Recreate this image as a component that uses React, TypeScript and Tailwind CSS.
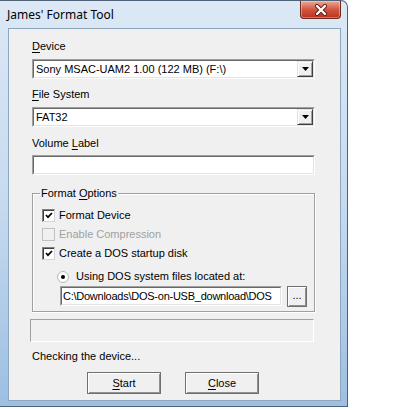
import React from "react";

const font = { fontFamily: '"Liberation Sans", Arial, sans-serif' };

function U({ children }: { children: React.ReactNode }) {
  return <span className="underline underline-offset-[2px] decoration-[1px]">{children}</span>;
}

function Sunken({ className = "", children }: { className?: string; children?: React.ReactNode }) {
  return (
    <div
      className={`border border-t-[#a0a0a0] border-l-[#a0a0a0] border-b-white border-r-white ${className}`}
    >
      <div className="h-full w-full border border-t-[#696969] border-l-[#696969] border-b-[#e3e3e3] border-r-[#e3e3e3] bg-white flex items-center">
        {children}
      </div>
    </div>
  );
}

function Combo({ value }: { value: string }) {
  return (
    <Sunken className="w-[283px] h-[20px]">
      <span className="flex-1 pl-[2px] text-[11px] leading-[13px] text-black whitespace-nowrap overflow-hidden">
        {value}
      </span>
      <div className="w-[16px] h-[16px] bg-[#f0f0f0] border border-t-[#e3e3e3] border-l-[#e3e3e3] border-b-[#404040] border-r-[#404040] shadow-[inset_1px_1px_0_#fff,inset_-1px_-1px_0_#a0a0a0] flex items-center justify-center">
        <svg width="7" height="4" viewBox="0 0 7 4">
          <path d="M0 0 H7 L3.5 4 Z" fill="#000" />
        </svg>
      </div>
    </Sunken>
  );
}

function Check({ checked, disabled }: { checked?: boolean; disabled?: boolean }) {
  return (
    <div
      className={`w-[13px] h-[13px] border ${
        disabled
          ? "border-[#c0c0c0] bg-[#f0f0f0]"
          : "border-t-[#808080] border-l-[#808080] border-b-[#d4d4d4] border-r-[#d4d4d4] bg-white shadow-[inset_1px_1px_0_#404040]"
      } flex items-center justify-center`}
    >
      {checked && (
        <svg width="8" height="7" viewBox="0 0 8 7">
          <path d="M1 3 L3 5.2 L7 1" fill="none" stroke="#000" strokeWidth="1.7" />
        </svg>
      )}
    </div>
  );
}

function Button({ children }: { children: React.ReactNode }) {
  return (
    <div className="w-[74px] h-[22px] bg-[#f0f0f0] border border-[#707070] shadow-[inset_1px_1px_0_#fff,inset_-1px_-1px_0_#909090] flex items-center justify-center text-[11px] leading-[13px] text-black">
      {children}
    </div>
  );
}

export default function App() {
  return (
    <div className="w-[419px] h-[410px] bg-white flex items-start" style={font}>
      <div className="relative w-[348px] h-[407px] rounded-tr-[7px] border-t border-r border-b border-[#4f6177] bg-linear-to-b from-[#dce8f5] via-[#c6daef] to-[#9cbfe2] flex flex-col">
        <div
          className="h-[27px] pl-[7px] flex items-center text-[12px] text-black"
          style={{ fontFamily: '"Noto Sans", "Open Sans", sans-serif' }}
        >
          James' Format Tool
        </div>

        <div className="absolute top-0 right-[6px] w-[41px] h-[18px] rounded-b-[4px] border border-t-0 border-[#6b2a20] bg-linear-to-b from-[#e9a995] via-[#d2563f] to-[#bc2f18] shadow-[inset_0_0_0_1px_rgba(255,255,255,0.35)] flex items-center justify-center">
          <svg width="14" height="12" viewBox="0 0 14 12">
            <path d="M3 2 L11 10 M11 2 L3 10" stroke="#5a1a10" strokeWidth="4" strokeLinecap="round" />
            <path d="M3 2 L11 10 M11 2 L3 10" stroke="#fff" strokeWidth="2.4" strokeLinecap="round" />
          </svg>
        </div>

        <div className="ml-[8px] w-[333px] h-[373px] border border-[#8fa6bf] bg-[#f0f0f0] pl-[23px] flex flex-col text-[11px] leading-[13px] text-black">
          <div className="mt-[11px] h-[13px]">
            <U>D</U>evice
          </div>
          <div className="mt-[6px]">
            <Combo value="Sony MSAC-UAM2 1.00 (122 MB) (F:\)" />
          </div>
          <div className="mt-[9px] h-[13px]">
            <U>F</U>ile System
          </div>
          <div className="mt-[6px]">
            <Combo value="FAT32" />
          </div>
          <div className="mt-[10px] h-[13px]">
            Volume <U>L</U>abel
          </div>
          <div className="mt-[5px]">
            <Sunken className="w-[283px] h-[20px]" />
          </div>

          <div className="relative mt-[18px] w-[283px] h-[119px] border border-[#a0a0a0] shadow-[inset_1px_1px_0_#fff,1px_1px_0_#fff] pt-[12px] pl-[9px] flex flex-col">
            <span className="absolute -top-[7px] left-[7px] px-[1px] bg-[#f0f0f0]">
              Format <U>O</U>ptions
            </span>
            <div className="h-[19px] flex items-center gap-[4px]">
              <Check checked />
              <span>Format Device</span>
            </div>
            <div className="h-[19px] flex items-center gap-[4px]">
              <Check disabled />
              <span className="text-[#a0a0a0]">Enable Compression</span>
            </div>
            <div className="h-[19px] flex items-center gap-[4px]">
              <Check checked />
              <span>Create a DOS startup disk</span>
            </div>
            <div className="mt-[4px] h-[19px] pl-[15px] flex items-center gap-[7px]">
              <div className="w-[12px] h-[12px] rounded-full border border-[#b8b8b8] bg-white flex items-center justify-center">
                <div className="w-[4px] h-[4px] rounded-full bg-black" />
              </div>
              <span>Using DOS system files located at:</span>
            </div>
            <div className="h-[21px] pl-[18px] flex items-start gap-[5px]">
              <Sunken className="w-[222px] h-[20px]">
                <span className="pl-[1px] whitespace-nowrap tracking-[-0.25px]">
                  C:\Downloads\DOS-on-USB_download\DOS
                </span>
              </Sunken>
              <div className="w-[20px] h-[21px] bg-[#f0f0f0] border border-[#707070] shadow-[inset_1px_1px_0_#fff,inset_-1px_-1px_0_#909090] flex items-end justify-center pb-[4px]">
                ...
              </div>
            </div>
          </div>

          <div className="mt-[7px] -ml-[2px] w-[284px] h-[23px] border border-t-[#a0a0a0] border-l-[#a0a0a0] border-b-white border-r-white" />

          <div className="mt-[8px] h-[13px]">Checking the device...</div>

          <div className="mt-[9px] pl-[55px] flex gap-[24px]">
            <Button>
              <U>S</U>tart
            </Button>
            <Button>
              <U>C</U>lose
            </Button>
          </div>
        </div>
      </div>
    </div>
  );
}
